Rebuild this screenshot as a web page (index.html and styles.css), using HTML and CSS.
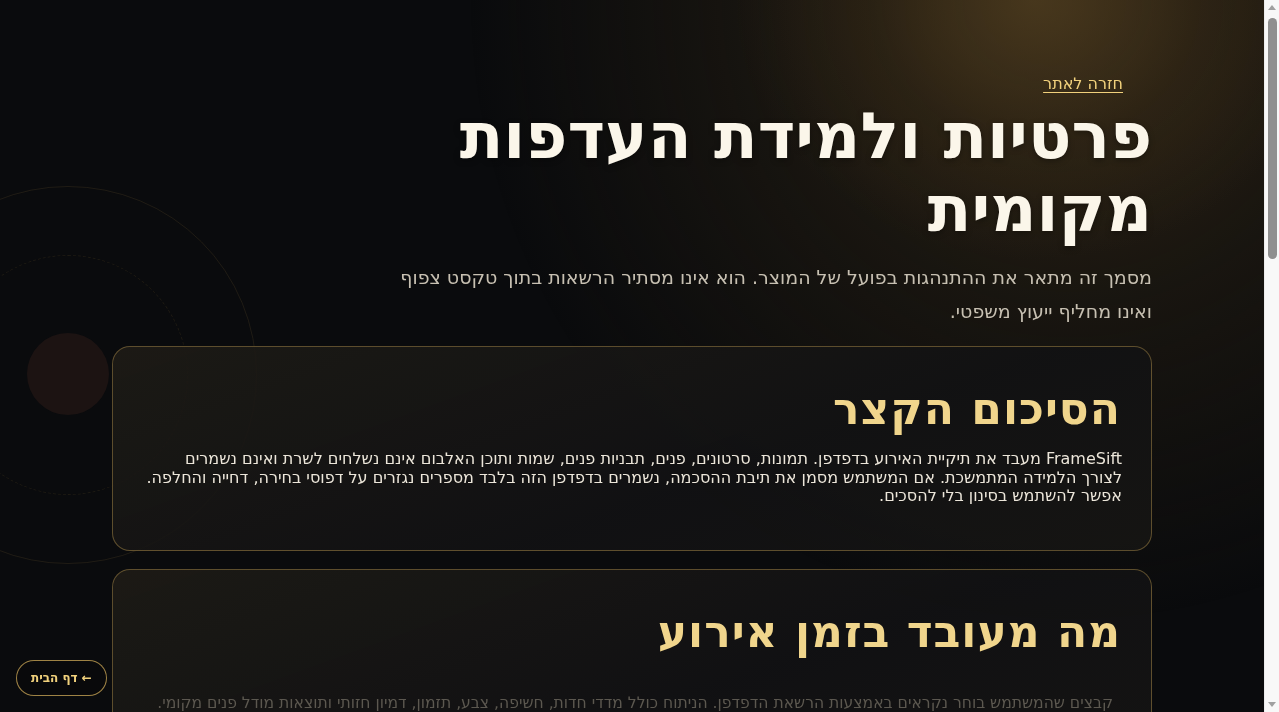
FILE: index.html
```html
<!DOCTYPE html>
<html lang="he" dir="rtl">
<head>
<meta charset="utf-8">
<title>פרטיות ולמידת העדפות מקומית</title>
<link rel="stylesheet" href="styles.css">
</head>
<body>
<div class="backdrop" aria-hidden="true">
  <div class="glow"></div>
  <div class="ring ring-outer"></div>
  <div class="ring ring-inner"></div>
  <div class="dot"></div>
</div>

<main class="page">
  <nav class="topnav"><a href="#" class="back-link">חזרה לאתר</a></nav>

  <header class="hero">
    <h1 class="title">פרטיות ולמידת העדפות מקומית</h1>
    <p class="lead">מסמך זה מתאר את ההתנהגות בפועל של המוצר. הוא אינו מסתיר הרשאות בתוך טקסט צפוף ואינו מחליף ייעוץ משפטי.</p>
  </header>

  <section class="card">
    <h2 class="card-title">הסיכום הקצר</h2>
    <p class="card-text">FrameSift מעבד את תיקיית האירוע בדפדפן. תמונות, סרטונים, פנים, תבניות פנים, שמות ותוכן האלבום אינם נשלחים לשרת ואינם נשמרים לצורך הלמידה המתמשכת. אם המשתמש מסמן את תיבת ההסכמה, נשמרים בדפדפן הזה בלבד מספרים נגזרים על דפוסי בחירה, דחייה והחלפה. אפשר להשתמש בסינון בלי להסכים.</p>
  </section>

  <section class="card card-faded">
    <h2 class="card-title">מה מעובד בזמן אירוע</h2>
    <p class="card-text dim">קבצים שהמשתמש בוחר נקראים באמצעות הרשאת הדפדפן. הניתוח כולל מדדי חדות, חשיפה, צבע, תזמון, דמיון חזותי ותוצאות מודל פנים מקומי.</p>
  </section>

  <section class="card card-faded">
    <h2 class="card-title">מה נשמר אחרי הסכמה</h2>
    <p class="card-text dim">רק ערכים מספריים מצטברים על העדפות בחירה נשמרים באחסון המקומי של הדפדפן. אין שמירה של תמונות, פנים או שמות קבצים.</p>
  </section>

  <section class="card card-faded">
    <h2 class="card-title">איך מוחקים את הנתונים</h2>
    <p class="card-text dim">אפשר לבטל את ההסכמה בכל רגע ולמחוק את כל הנתונים הנגזרים מתוך מסך ההגדרות, או לנקות את נתוני האתר בדפדפן.</p>
  </section>

  <section class="card card-faded">
    <h2 class="card-title">יצירת קשר</h2>
    <p class="card-text dim">לשאלות על פרטיות ועל אופן פעולת המוצר אפשר לפנות אלינו דרך עמוד התמיכה באתר.</p>
  </section>
</main>

<a href="#" class="home-pill">← דף הבית</a>

<div class="scrollbar" aria-hidden="true">
  <span class="sb-arrow sb-up"></span>
  <span class="sb-thumb"></span>
  <span class="sb-arrow sb-down"></span>
</div>
</body>
</html>
```
FILE: styles.css
```css
* { box-sizing: border-box; }

html {
  background: #0a0b0d;
}

body {
  margin: 0;
  padding-right: 15px;
  min-height: 100vh;
  color: #ede6d8;
  font-family: "DejaVu Sans", "Noto Sans", sans-serif;
  background: #0a0b0d;
}

.backdrop {
  position: fixed;
  top: 0;
  bottom: 0;
  left: 0;
  right: 15px;
  pointer-events: none;
  z-index: 0;
  overflow: hidden;
}

.glow {
  position: absolute;
  inset: 0;
  background:
    radial-gradient(ellipse 300px 260px at 1035px 0px, rgba(80, 62, 32, 0.75) 0%, rgba(60, 46, 24, 0.35) 55%, rgba(0, 0, 0, 0) 100%),
    radial-gradient(ellipse 600px 620px at 1070px 0px, rgba(52, 40, 22, 0.9) 0%, rgba(34, 28, 18, 0.6) 50%, rgba(10, 11, 13, 0) 100%);
}

.ring {
  position: absolute;
  border-radius: 50%;
}

.ring-outer {
  left: -121px;
  top: 186px;
  width: 378px;
  height: 378px;
  border: 1.5px solid rgba(150, 120, 60, 0.16);
}

.ring-inner {
  left: -52px;
  top: 255px;
  width: 240px;
  height: 240px;
  border: 1.5px dashed rgba(150, 120, 60, 0.14);
}

.dot {
  position: absolute;
  left: 27px;
  top: 333px;
  width: 82px;
  height: 82px;
  border-radius: 50%;
  background: rgba(45, 28, 24, 0.5);
}

.page {
  position: relative;
  z-index: 1;
  max-width: 1040px;
  margin: 0 auto;
  padding: 72px 0 80px;
}

.topnav {
  padding-inline-start: 29px;
  line-height: 23px;
}

.back-link {
  color: #f1d17c;
  font-size: 16px;
  text-decoration: underline;
  text-underline-offset: 3px;
}

.hero {
  max-width: 780px;
  margin-top: 5px;
}

.title {
  margin: 0;
  font-size: 64px;
  line-height: 73px;
  font-weight: 700;
  color: #fbf6ea;
  text-shadow: 0 2px 6px rgba(0, 0, 0, 0.35);
}

.lead {
  margin: 14px 0 0;
  font-size: 19px;
  line-height: 34px;
  color: #c7c0b2;
}

.card {
  margin-top: 18px;
  padding: 37px 29px 44px;
  border: 1px solid rgba(196, 160, 84, 0.42);
  border-radius: 18px;
  background: linear-gradient(160deg, rgba(30, 27, 22, 0.9) 0%, rgba(18, 18, 19, 0.92) 60%, rgba(22, 21, 19, 0.92) 100%);
}

.card-title {
  margin: 0 1px 16px 0;
  font-size: 44px;
  line-height: 50px;
  font-weight: 700;
  letter-spacing: 1px;
  color: #f0d58c;
}

.card-text {
  margin: 0;
  font-size: 16px;
  line-height: 18.5px;
  color: #ece6da;
}

.card-faded .card-title {
  margin-bottom: 37px;
}

.card-text.dim {
  font-size: 15.6px;
  margin-inline-start: 9px;
  color: #5c5850;
}

.home-pill {
  position: fixed;
  left: 16px;
  bottom: 16px;
  z-index: 5;
  display: flex;
  align-items: center;
  justify-content: center;
  height: 36px;
  padding: 0 14px;
  border: 1px solid rgba(210, 172, 90, 0.75);
  border-radius: 999px;
  background: rgba(10, 10, 11, 0.92);
  color: #f1d17c;
  font-size: 12px;
  font-weight: 700;
  text-decoration: none;
}

.scrollbar {
  position: fixed;
  top: 0;
  right: 0;
  bottom: 0;
  width: 15px;
  z-index: 10;
  background: #f8f8f8;
  border-left: 1px solid #ececec;
}

.sb-thumb {
  position: absolute;
  top: 18px;
  left: 3px;
  width: 9px;
  height: 241px;
  border-radius: 5px;
  background: #8f8f8f;
}

.sb-arrow {
  position: absolute;
  left: 3px;
  width: 0;
  height: 0;
  border-left: 4.5px solid transparent;
  border-right: 4.5px solid transparent;
}

.sb-up {
  top: 5px;
  border-bottom: 5px solid #a0a0a0;
}

.sb-down {
  bottom: 5px;
  border-top: 5px solid #a0a0a0;
}
```
